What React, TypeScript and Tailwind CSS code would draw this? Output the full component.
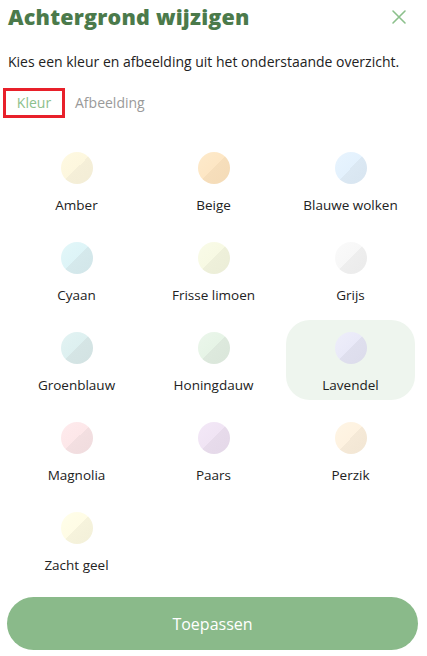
import React from "react";

const colors = [
  { name: "Amber", cls: "bg-[linear-gradient(135deg,#fef9e2_0%,#fdf7de_50%,#f5efd8_50%,#f3edd6_100%)]" },
  { name: "Beige", cls: "bg-[linear-gradient(135deg,#fdeacb_0%,#fde6c4_50%,#f6debb_50%,#f4dbb7_100%)]" },
  { name: "Blauwe wolken", cls: "bg-[linear-gradient(135deg,#e8f4fe_0%,#e3f1fd_50%,#dbe8f3_50%,#d8e5f0_100%)]" },
  { name: "Cyaan", cls: "bg-[linear-gradient(135deg,#e3f7f9_0%,#ddf4f7_50%,#d5e9ec_50%,#d2e6e9_100%)]" },
  { name: "Frisse limoen", cls: "bg-[linear-gradient(135deg,#f9fbe8_0%,#f7f9e3_50%,#eef0da_50%,#ebedd7_100%)]" },
  { name: "Grijs", cls: "bg-[linear-gradient(135deg,#fafafa_0%,#f7f7f7_50%,#eeeeee_50%,#ebebeb_100%)]" },
  { name: "Groenblauw", cls: "bg-[linear-gradient(135deg,#e3f3f3_0%,#ddf0f0_50%,#d5e5e5_50%,#d2e2e2_100%)]" },
  { name: "Honingdauw", cls: "bg-[linear-gradient(135deg,#ebf6eb_0%,#e6f4e6_50%,#dde9dd_50%,#dae6da_100%)]" },
  { name: "Lavendel", cls: "bg-[linear-gradient(135deg,#eeeefa_0%,#e9e9f8_50%,#dfdfee_50%,#dcdceb_100%)]", selected: true },
  { name: "Magnolia", cls: "bg-[linear-gradient(135deg,#feebed_0%,#fde7e9_50%,#f3dfe1_50%,#f0dcde_100%)]" },
  { name: "Paars", cls: "bg-[linear-gradient(135deg,#f3e8f7_0%,#f0e4f4_50%,#e7dbeb_50%,#e4d8e8_100%)]" },
  { name: "Perzik", cls: "bg-[linear-gradient(135deg,#fef5e5_0%,#fef2e0_50%,#f5e9d7_50%,#f2e6d4_100%)]" },
  { name: "Zacht geel", cls: "bg-[linear-gradient(135deg,#fffeea_0%,#fffce5_50%,#f6f3dc_50%,#f3f0d9_100%)]" },
];

export default function App() {
  return (
    <div
      className="h-[656px] w-[427px] bg-white flex flex-col px-2 overflow-hidden"
      style={{ fontFamily: '"Open Sans", "Noto Sans", sans-serif' }}
    >
      <div className="flex items-center justify-between h-[34px]">
        <h1 className="text-[21.5px] leading-none font-extrabold text-[#4b7a4b] tracking-[0.2px]">
          Achtergrond wijzigen
        </h1>
        <button className="mr-[12px] text-[#8cc08c]" aria-label="Sluiten">
          <svg width="16" height="16" viewBox="0 0 16 16" fill="none" stroke="currentColor" strokeWidth="1.6" strokeLinecap="round">
            <path d="M2 2L14 14M14 2L2 14" />
          </svg>
        </button>
      </div>
      <p className="mt-[18px] text-[14px] leading-[20px] text-[#222222]">
        Kies een kleur en afbeelding uit het onderstaande overzicht.
      </p>
      <div className="mt-[16px] flex items-center gap-[10px] -ml-[5px]">
        <div className="h-[30px] w-[62px] border-[3px] border-[#e8202a] flex items-center justify-center text-[14px] leading-[20px] pb-[1px] text-[#8cc08c]">
          Kleur
        </div>
        <div className="text-[14px] leading-[20px] pb-[1px] text-[#9a9a9a]">Afbeelding</div>
      </div>
      <div className="mt-[22px] grid grid-cols-3 gap-y-[10px]">
        {colors.map((c) => (
          <div key={c.name} className="px-[4px]">
            <div
              className={
                "h-[80px] rounded-[24px] flex flex-col items-center pt-[12px] " +
                (c.selected ? "bg-[#eef5ee]" : "")
              }
            >
              <div className={"h-[32px] w-[32px] rounded-full " + c.cls} />
              <div className="mt-[12px] text-[13.5px] leading-[18px] text-[#222222]">{c.name}</div>
            </div>
          </div>
        ))}
      </div>
      <div className="flex-1" />
      <button className="mb-[6px] h-[53px] w-full rounded-full bg-[#8aba8a] text-white text-[16px] -ml-[1px]">
        Toepassen
      </button>
    </div>
  );
}
